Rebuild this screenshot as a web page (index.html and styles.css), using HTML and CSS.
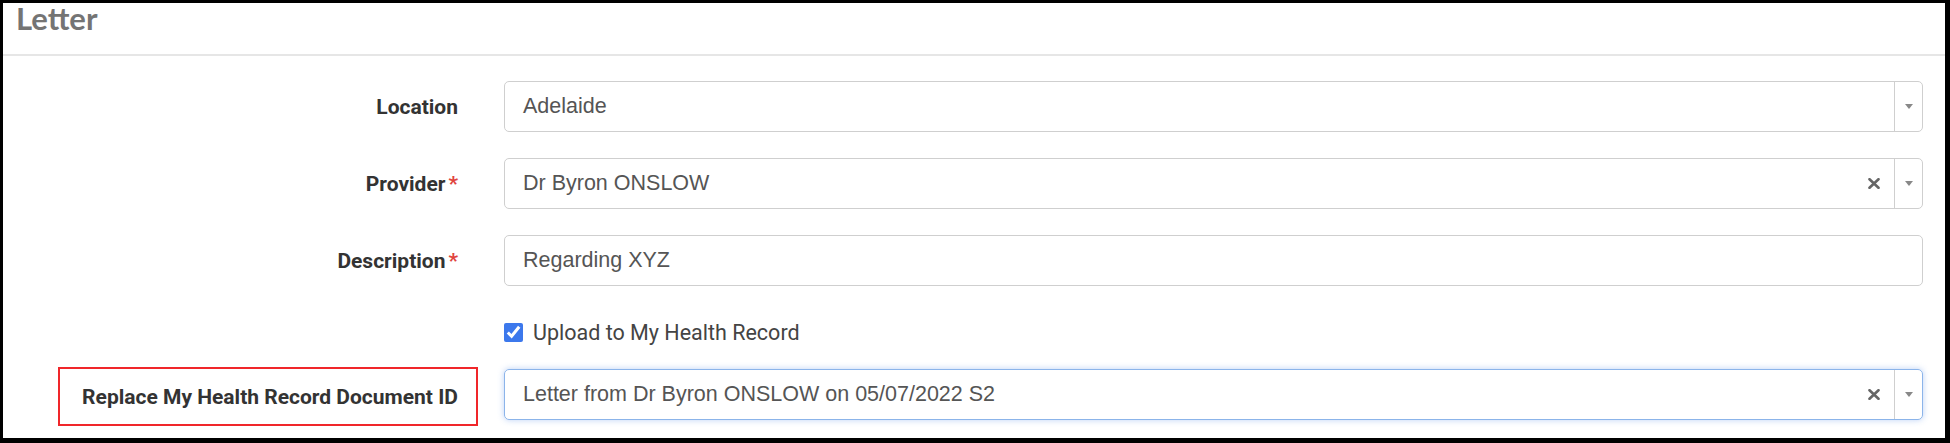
FILE: index.html
```html
<!DOCTYPE html>
<html>
<head>
<meta charset="utf-8">
<link rel="stylesheet" href="styles.css">
</head>
<body>
<div class="panel">
  <div class="panel-head"><h2 class="title">Letter</h2></div>
  <form class="form">
    <div class="row">
      <label class="lbl">Location</label>
      <div class="select">
        <span class="value">Adelaide</span>
        <span class="arrow-cell"><span class="arrow"></span></span>
      </div>
    </div>
    <div class="row">
      <label class="lbl">Provider<span class="req">*</span></label>
      <div class="select">
        <span class="value">Dr Byron ONSLOW</span>
        <span class="clear"><svg width="12" height="11" viewBox="0 0 12 11"><path d="M1.5 1.2 L10.5 9.8 M10.5 1.2 L1.5 9.8" stroke="#666" stroke-width="2.6" stroke-linecap="round"/></svg></span>
        <span class="arrow-cell"><span class="arrow"></span></span>
      </div>
    </div>
    <div class="row">
      <label class="lbl">Description<span class="req">*</span></label>
      <div class="text-input"><span class="value">Regarding XYZ</span></div>
    </div>
    <div class="row row-check">
      <span></span>
      <label class="check"><input type="checkbox" class="cb" checked> Upload to My Health Record</label>
    </div>
    <div class="row row-boxed">
      <label class="lbl lbl-boxed">Replace My Health Record Document ID</label>
      <div class="select focused">
        <span class="value">Letter from Dr Byron ONSLOW on 05/07/2022 S2</span>
        <span class="clear"><svg width="12" height="11" viewBox="0 0 12 11"><path d="M1.5 1.2 L10.5 9.8 M10.5 1.2 L1.5 9.8" stroke="#666" stroke-width="2.6" stroke-linecap="round"/></svg></span>
        <span class="arrow-cell"><span class="arrow"></span></span>
      </div>
    </div>
  </form>
</div>
</body>
</html>
```

FILE: styles.css
```css
* { box-sizing: border-box; }
html, body { margin: 0; padding: 0; background: #fff; }
body { font-family: Roboto, "Noto Sans", sans-serif; }

.panel {
  width: 1950px;
  height: 443px;
  border: 3px solid #000;
  border-right-width: 5px;
  border-bottom-width: 5px;
  overflow: hidden;
  background: #fff;
}

.panel-head {
  height: 53px;
  border-bottom: 2px solid #e6e6e6;
  padding: 0 13px;
}
.title {
  margin: 0;
  font-family: Lato, "Open Sans", sans-serif;
  font-weight: 700;
  font-size: 31px;
  line-height: 27px;
  color: #747474;
  padding-top: 2px;
}

.form {
  display: flex;
  flex-direction: column;
  padding: 25px 22px 0 55px;
}

.row {
  display: grid;
  grid-template-columns: 420px 1fr;
  column-gap: 26px;
  align-items: center;
  min-height: 51px;
  margin-bottom: 26px;
}
.row-check { min-height: 28px; margin-top: 6px; margin-bottom: 23px; }

.lbl {
  text-align: right;
  font-weight: 700;
  font-size: 21px;
  color: #333;
  padding-right: 20px;
}
.req { color: #e0443e; margin-left: 3px; }

.row-boxed { align-items: start; }
.lbl-boxed {
  border: 2px solid #f0262a;
  height: 59px;
  margin-top: -2px;
  display: flex;
  align-items: center;
  justify-content: flex-end;
  padding-right: 18px;
}

.select, .text-input {
  height: 51px;
  border: 1px solid #cfcfcf;
  border-radius: 5px;
  display: flex;
  align-items: center;
  font-family: "Liberation Sans", Arial, sans-serif;
  font-size: 21.5px;
  color: #555;
}
.value { flex: 1; padding-left: 18px; white-space: nowrap; }
.clear {
  width: 12px;
  height: 11px;
  display: flex;
  margin-right: 14px;
}
.clear svg { display: block; }
.arrow-cell {
  width: 28px;
  height: 100%;
  border-left: 1px solid #cfcfcf;
  display: flex;
  align-items: center;
  justify-content: center;
}
.arrow {
  width: 0; height: 0;
  border-left: 4px solid transparent;
  border-right: 4px solid transparent;
  border-top: 5px solid #888;
}

.focused {
  border-color: #8bb4ea;
  box-shadow: 0 0 6px rgba(102, 150, 233, 0.45);
}

.check {
  display: flex;
  align-items: center;
  font-size: 21.5px;
  color: #444;
  gap: 10px;
}
.cb {
  width: 19px; height: 19px;
  margin: 0;
  accent-color: #3c78ec;
}
```
